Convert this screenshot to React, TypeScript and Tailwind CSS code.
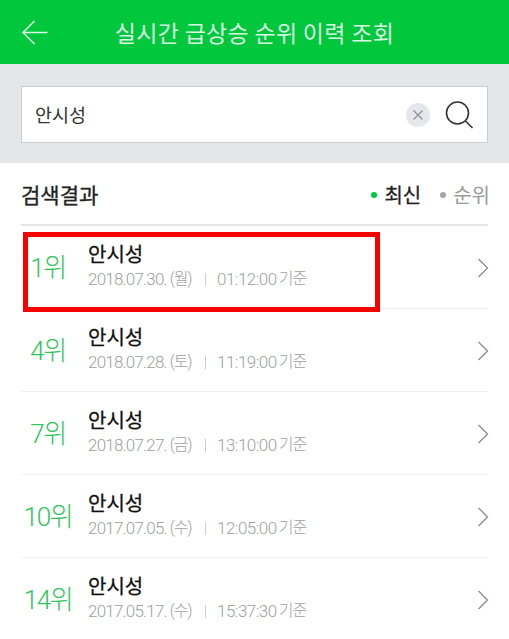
const font = { fontFamily: '"Noto Sans CJK KR", "Liberation Sans", sans-serif' };
const latin = { fontFamily: 'Roboto, "Noto Sans CJK KR", sans-serif' };

const rows = [
  { rank: '1위', date: '2018.07.30.', day: '(월)', time: '01:12:00' },
  { rank: '4위', date: '2018.07.28.', day: '(토)', time: '11:19:00' },
  { rank: '7위', date: '2018.07.27.', day: '(금)', time: '13:10:00' },
  { rank: '10위', date: '2017.07.05.', day: '(수)', time: '12:05:00' },
  { rank: '14위', date: '2017.05.17.', day: '(수)', time: '15:37:30' },
];

export default function App() {
  return (
    <div className="relative w-[509px] h-[639px] overflow-hidden bg-white" style={font}>
      {/* 상단 헤더 */}
      <div className="relative flex h-16 items-center justify-center bg-[#00c73c]">
        <svg className="absolute left-[21px] top-[18px]" width="28" height="28" viewBox="0 0 28 28" fill="none" stroke="#d9f7e2" strokeWidth="1.6">
          <path d="M26.5 14.5H2M13.5 3L2 14.5L13.5 26" />
        </svg>
        <span className="text-[23px] font-normal leading-none tracking-[0.3px] text-[#d9f7e2]">실시간 급상승 순위 이력 조회</span>
      </div>

      {/* 검색 */}
      <div className="h-[99px] bg-[#e4e7ea] px-[21px] pt-[22px]">
        <div className="flex h-[57px] w-[467px] items-center border border-[#c9ccd1] bg-white pl-[13px] pr-[13px]">
          <span className="flex-1 text-[18.5px] leading-none text-[#333]">안시성</span>
          <div className="mr-[14px] flex h-6 w-6 items-center justify-center rounded-full bg-[#e6e7ec]">
            <svg width="12" height="12" viewBox="0 0 12 12" stroke="#8d9096" strokeWidth="1.2">
              <path d="M1.5 1.5L10.5 10.5M10.5 1.5L1.5 10.5" />
            </svg>
          </div>
          <svg width="30" height="30" viewBox="0 0 30 30" fill="none" stroke="#333" strokeWidth="1.6">
            <circle cx="13.5" cy="13" r="11" />
            <path d="M21.5 21L28.5 28" />
          </svg>
        </div>
      </div>

      {/* 검색결과 제목 */}
      <div className="mx-[21px] flex h-[63px] items-center justify-between border-b-2 border-[#e3e4e6] pt-[2px]">
        <span className="text-[21px] leading-none text-[#222] [-webkit-text-stroke:0.35px_#222]">검색결과</span>
        <div className="mr-[-2px] flex items-center text-[20px] leading-none">
          <span className="mr-[7px] h-[6px] w-[6px] rounded-full bg-[#00c73c]" />
          <span className="text-[#222] [-webkit-text-stroke:0.3px_#222]">최신</span>
          <span className="ml-[19px] mr-[7px] h-[6px] w-[6px] rounded-full bg-[#a5a5a5]" />
          <span className="text-[#9a9a9a]">순위</span>
        </div>
      </div>

      {/* 목록 */}
      <div className="mx-[21px]">
        {rows.map((row) => (
          <div key={row.rank} className="flex h-[83px] items-center border-b border-[#f1f1f1]">
            <span className="ml-[1px] mt-[1px] w-[52px] shrink-0 whitespace-nowrap text-center text-[26px] font-light leading-none tracking-[-1.4px] text-[#2fc45c]" style={latin}>{row.rank}</span>
            <div className="ml-[14px] flex-1 pb-[3px]">
              <div className="text-[20px] leading-[26px] text-[#111] [-webkit-text-stroke:0.3px_#111]">안시성</div>
              <div className="mt-[1px] flex items-center whitespace-nowrap text-[17px] font-light leading-[22px] text-[#a0a0a0]" style={latin}>
                <span className="flex w-[117px]">
                  <span className="tracking-[-0.8px]">{row.date}</span>
                  <span className="ml-[3px] text-[16px] tracking-[-1.2px]">{row.day}</span>
                </span>
                <span className="mr-[11px] h-[13px] w-px bg-[#cfcfcf]" />
                <span className="tracking-[-0.5px]">{row.time}</span>
                <span className="ml-[2px] text-[16px] tracking-[-1px]">기준</span>
              </div>
            </div>
            <svg className="mr-[-1px] mt-[2px]" width="12" height="22" viewBox="0 0 12 22" fill="none" stroke="#8f8f8f" strokeWidth="1.4">
              <path d="M1.5 2L10.5 11L1.5 20" />
            </svg>
          </div>
        ))}
      </div>

      {/* 빨간 강조 박스 */}
      <div className="absolute left-[23px] top-[232px] h-[80px] w-[357px] border-[5px] border-[#f60000]" />
    </div>
  );
}
